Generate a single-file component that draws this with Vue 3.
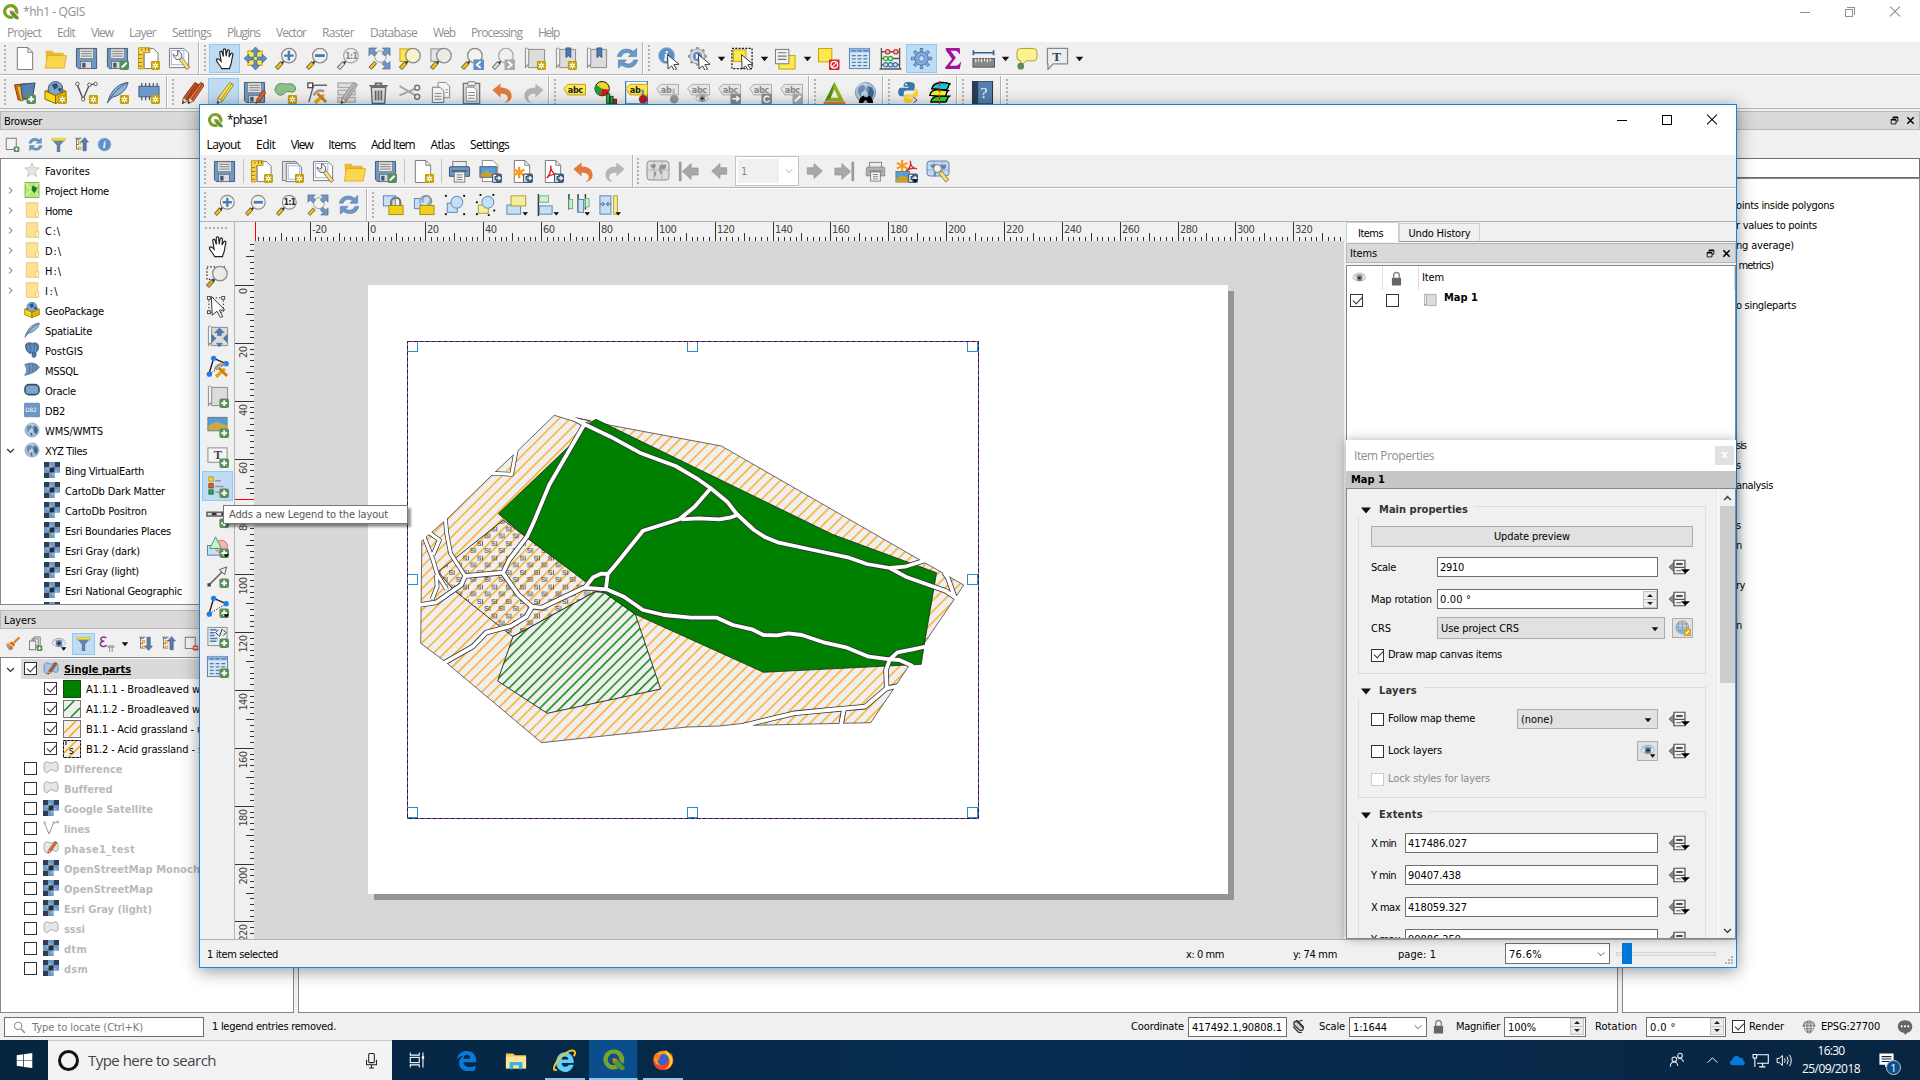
<script setup>
import { h } from 'vue'

/* Sets the tracking of a label so that it fills the given width. */
const vFit = {
  mounted(el, { value }) {
    if (!value) return
    const n = el.textContent.trim().length
    el.style.letterSpacing = (value - el.getBoundingClientRect().width) / n + 'px'
  },
}

/* ---------- icon library (24 x 24 grid) ---------- */
const B = '#6d97c4'
const add = '<rect x="14" y="14" width="10" height="10" rx="2" fill="#5a8c5a"/><path d="M19 16v6M16 19h6" stroke="#fff" stroke-width="2"/>'
const star = '<rect x="14.5" y="14.5" width="9.5" height="9.5" rx="1.5" fill="#c4a000"/><path d="M19.2 15.8v7M16.2 17.5l6 3.6M22.2 17.5l-6 3.6" stroke="#fff" stroke-width="1.3"/><circle cx="19.2" cy="19.3" r="1.8" fill="#fff"/><circle cx="19.2" cy="19.3" r=".8" fill="#c4a000"/>'
const exp = '<rect x="13.5" y="14" width="10.5" height="10" rx="2" fill="#415a75"/><path d="M18 16h-2.500v6h2.500M18 19h4M20.300 17l2 2-2 2" stroke="#fff" stroke-width="1.300" fill="none"/>'
const drop = '<path d="M18 20h6l-3 3.500z" fill="#000"/>'
const lens = (fill = '#f2f2ee', hnd = '#fcc200', rim = '#8a8a86') =>
  `<path d="M1.500 22.500L7.500 16" stroke="#555" stroke-width="4.400"/><path d="M2 22L7 16.700" stroke="${hnd}" stroke-width="2.800"/><path d="M7 17l3-3" stroke="#333" stroke-width="1.800"/><circle cx="14.500" cy="9" r="7.600" fill="${fill}" stroke="${rim}" stroke-width="1.300"/>`
const floppy = (w = 22) => `<path d="M1.500 1.500h${w - 1}v21h-19l-2-2z" fill="${B}" stroke="#415a75"/><rect x="5" y="2" width="14" height="10" fill="#e8e8e8" stroke="#777" stroke-width=".7"/><path d="M6.500 4.500h11M6.500 7h11M6.500 9.500h11" stroke="#777"/><rect x="6" y="15" width="11" height="7.500" fill="#ddd" stroke="#555" stroke-width=".6"/><rect x="7.500" y="16.500" width="3.500" height="5" fill="#415a75"/>`
const page = '<path d="M4.500.5h11l5 5v18h-16z" fill="#fff" stroke="#777"/><path d="M15.500.5v5h5" fill="none" stroke="#777"/>'
const folder = '<path d="M1.500 4h7l2 2h10v3h3l-2.500 13h-18z" fill="#e9b92f"/><path d="M1.500 22L3.500 9h20l-2.500 13z" fill="#fcd64e" stroke="#d9a522" stroke-width=".8"/>'
const undo = (c) => `<path d="M1.500 9.500L10 2.500v4.300c7 0 11.500 3 11.500 9 0 4-3.500 6.500-8 7 3-1.300 4-3 4-5 0-3-2.500-4.500-7.500-4.500v4z" fill="${c}"/>`
const flip = (s) => `<g transform="translate(24 0) scale(-1 1)">${s}</g>`
const refresh = `<path d="M1.500 10C2.500 3 11-.5 18 4.500L21.500 1.500v8.500H13l2.700-2.800C11.500 4.500 7 6 5.700 10z" fill="${B}" stroke="#4c78a8" stroke-width=".6"/><path d="M22.500 13.500c-1 7-9.500 10.500-16.500 5.500L2.500 22v-8.500H11l-2.700 2.800c4.200 2.700 8.700 1.200 10-2.800z" fill="${B}" stroke="#4c78a8" stroke-width=".6"/>`
const hand = '<path d="M7.500 22.500C6 19 2 15.500 2 13.500c0-1.500 2-1.500 3.200-.3L7 15 5.600 6.300c-.3-2 1.900-2.300 2.400-.6L9.300 10 9.200 3.500c0-2 2.500-2 2.600 0L12.200 9.600l1-5.400c.4-1.800 2.600-1.400 2.400.5L15.200 10.500l1.800-3.300c.9-1.500 2.700-.6 2.200 1-.8 3-1.200 6.500-1.700 8.800-.4 2-1.500 3.500-1.800 5.500z" fill="#fff" stroke="#222" stroke-width="1.200" transform="translate(1.500 0)"/>'
const arrows4 = (c) => `<path d="M1 1h8L6.500 3.500l3 3-3 3-3-3L1 9zM23 1v8l-2.500-2.500-3 3-3-3 3-3L15 1zM23 23h-8l2.500-2.500-3-3 3-3 3 3L23 15z" fill="${c}" stroke="#415a75" stroke-width=".6"/>`
const pencil = (a, b) => `<path d="M18.500 1.500l4 2.500L11 21l-5.500 2.500L6.500 17.500z" fill="${a}" stroke="${b}" stroke-width=".9"/><path d="M20.500 2.800L9 20" stroke="${b}" stroke-width=".8"/><path d="M6.500 17.500l4.500 3.300-5.500 2.700z" fill="#f0dcb4" stroke="#555" stroke-width=".5"/><path d="M6 20.800l1.700 1.500-2.500 1.400z" fill="#222"/>`
const sheet = '<path d="M5.500 2.500h17v19h-17z" fill="#dcdcdc" stroke="#8a8a8a"/><path d="M2.500 1.500c2-1 3.500 0 3.500 2v15.500c-1.500-1-3.500.5-3.500 3z" fill="#f2f2f2" stroke="#8a8a8a"/><path d="M2.500 22c0-1.500 1-2.500 3-2.500" fill="none" stroke="#8a8a8a"/>'
const globe = '<circle cx="12" cy="12" r="10.500" fill="#a9c2dc" stroke="#6f8fb3"/><path d="M4 7l5-3 3 2-1 4-3 2-1 4-3-4zM14 5l5 2 2 5-2 6-3-1-2-5-2-3zM9 17l3-1 1 4-2 1z" fill="#40658f"/><circle cx="9" cy="8" r="7" fill="#fff" opacity=".25"/>'
const tag = (c, s, t = 'abc', k = '#222') => `<path d="M.8 8L5 3.500h18.500v11H5z" fill="${c}" stroke="${s}"/><text x="5" y="12" font-size="8.500" font-weight="700" font-family="DejaVu Sans" letter-spacing="-.4" fill="${k}">${t}</text>`
const cursor = '<path d="M11 8l12 10-5.500.5 3 4.500-2.500 1.500-2.800-4.700L11.500 23z" fill="#fff" stroke="#333"/>'
const padlock = (b, s) => `<path d="M8 11V7.500a4 4 0 0 1 8 0V11" fill="none" stroke="${s}" stroke-width="2"/><rect x="5.500" y="11" width="13" height="11" rx="1" fill="${b}"/>`
const nodes = '<path d="M3 20L8 3.500 21 9" stroke="#222" fill="none" stroke-width="1.500"/><path d="M3 20L21 9" stroke="#222" stroke-dasharray="1.500 1.500"/><g fill="#1e7cf0"><circle cx="3.500" cy="20" r="2.800"/><circle cx="8" cy="3.500" r="2.800"/><circle cx="21" cy="9" r="2.800"/></g>'
const tools = '<path d="M10 22l9-8M11 23.500l9-9" stroke="#e3a914" stroke-width="2.200"/><path d="M13 13l9 9" stroke="#c98010" stroke-width="3"/><path d="M9 15c3-5 7-6 11-4" stroke="#999" stroke-width="2.500" fill="none"/>'
const tiles = '<g fill="#6d97c4"><rect x="8" width="8" height="8"/><rect y="8" width="8" height="8"/><rect x="16" y="8" width="8" height="8"/><rect x="8" y="16" width="8" height="8"/></g><rect x="8" y="8" width="8" height="8" fill="#1f2d3f"/><g fill="#2c3e55"><rect width="8" height="8"/><rect x="16" width="8" height="8"/><rect y="16" width="8" height="8"/></g><g fill="#8bb0da"><rect x="8" y="4" width="4" height="4"/><rect x="4" y="8" width="4" height="4"/><rect x="16" y="12" width="4" height="4"/><rect x="12" y="16" width="4" height="4"/></g>'
const poly = (c = '#e6e6e6', s = '#999') => `<path d="M1.500 8c0-5 4-6.500 7-4.500s6 1 9-.5c3-1 5 1 5 5s1 8-2 9-5-2.500-8-2.500-4 4-7 4.500c-4 0-4-6-4-11z" fill="${c}" stroke="${s}" stroke-width="1.200"/>`
const eye = (c) => `<path d="M1.500 11C6 4.500 17 4 22 11c-4 6.500-15 7-20.500 0z" fill="#f4f4f4" stroke="#999" stroke-width="1.200"/><path d="M2 8C7 2 17 2.500 21 7" fill="none" stroke="#aaa" stroke-width="1.500"/><circle cx="12" cy="11" r="5" fill="${c}"/><circle cx="12" cy="11" r="2" fill="#222"/>`
const tree = '<path d="M4 2v18M4 4h5M4 12h4M4 19h4" stroke="#666" stroke-width="1.300" fill="none"/><g fill="#fce08a" stroke="#d9861a"><rect x="7" y="7" width="4" height="4"/><rect x="7" y="16" width="4" height="4"/></g><path d="M2 2h10" stroke="#888" stroke-width="2"/>'
const gearPath = (c, s) => `<g stroke="${s}" stroke-width="3.400"><path d="M12 1v22M1 12h22M4.300 4.300l15.400 15.400M19.700 4.300L4.300 19.700"/></g><g stroke="${c}" stroke-width="2"><path d="M12 2v20M2 12h20M5 5l14 14M19 5L5 19"/></g><circle cx="12" cy="12" r="7" fill="${c}" stroke="${s}"/><circle cx="12" cy="12" r="3" fill="#bfdaf2" stroke="${s}"/>`
const tableIcon = `<rect x="1.500" y="1.500" width="21" height="21" fill="#d7e6f5" stroke="#5580b0"/><path d="M2 3.500h20" stroke="#8db4de" stroke-width="4"/><path d="M4 4h4M10 4h4M16 4h5M4 9h4M10 9h4M16 9h4M4 12.500h4M10 12.500h4M16 12.500h4M4 16h4M10 16h4M16 16h4M4 19.500h4M10 19.500h4M16 19.500h4" stroke="#4f7cb0" stroke-width="1.300"/>`
const qlogo = '<path d="M12 1.500a10.500 10.500 0 1 0 5 19.700l-3.300-3.600A6 6 0 1 1 18 12.500l4 4.200A10.500 10.500 0 0 0 12 1.500z" fill="#7aa32b"/><path d="M11 11l4.500.4 8 8.800V23h-4L11.400 15z" fill="#589632"/><path d="M11 10.500l5 .8-4.500 4.500z" fill="#ee7913"/>'
const arrowFat = (c) => `<path d="M2 12L12 3v5h8v8h-8v5z" fill="${c}" stroke="#8a8a8a" stroke-width=".7"/>`
const printer = (a, b) => `<rect x="5" y="1.500" width="14" height="8" fill="#eee" stroke="#777"/><path d="M1.500 8.500q0-1.500 1.500-1.500h18q1.500 0 1.500 1.500V17h-21z" fill="${a}" stroke="${b}"/><path d="M4 11.500h16" stroke="${b}" stroke-width="1.500"/><rect x="6.500" y="12.500" width="11" height="10.500" fill="#f5f5f5" stroke="#777"/><path d="M9 15.500h6M9 18h6M9 20.500h6" stroke="#777"/>`
const worldMap = (c, k, ht = 19) => `<rect x="1" y="2" width="22" height="${ht}" rx="3" fill="${c}" stroke="${k}"/><path d="M8 2v${ht}M16 2v${ht}M1 11h22" stroke="${k}" stroke-width=".5"/><path d="M4 6l5-1 1 2-2 3-2-1zM8.500 12l2 2-1.500 4-1-1zM14 6l6-.5v3l-2 2-2-1-1.500 1 1.500 3-1.500 2-1.500-5z" fill="${k}"/>`
const wrench = '<path d="M13 12l8.500 10.500" stroke="#8a7a3a" stroke-width="4.500"/><path d="M13.500 12.500L21 22" stroke="#f1dd8a" stroke-width="3"/><path d="M5.500 7.500c0 4 3 6 6.500 5.500l2.500-2.500C14.500 7 13 4.500 10 4v4.500L8 9.500 5.800 7.500z" fill="#eee" stroke="#555"/>'

const ICONS = {
  qgis: qlogo,
  page, folder, floppy: floppy(), refresh, hand, sheet, globe, nodes, tiles,
  floppyEdit: floppy() + '<rect x="14" y="14" width="10" height="10" rx="2" fill="#5a8c5a"/><path d="M16.500 21.500l5-5" stroke="#fff" stroke-width="2.200"/>',
  newPage: page + star,
  newLayout: '<path d="M7.500 1.500h9.500l5 5v16H7.500z" fill="#fff" stroke="#777"/><path d="M1.500.8h12v5h-7v17h-5z" fill="#f8d64c" stroke="#b8901c"/><path d="M4 3h2M9 1v3M12 1v3M2 8h3M2 12h3M2 16h3M2 20h3" stroke="#8a6a10"/>' + star,
  dupLayout: '<path d="M1.500 1.500h14l3 3v17h-17z" fill="#e0e0e0" stroke="#777"/><path d="M5.500 3.500h12l4 4v15h-16z" fill="#fff" stroke="#777"/><rect x="7.500" y="6" width="12" height="14" fill="none" stroke="#9ab0e6"/>' + star,
  layoutMgr: '<path d="M1.500 1.500h15l5 5v15h-20z" fill="#fff" stroke="#777"/><rect x="3.500" y="3.500" width="13" height="15" fill="none" stroke="#9ab0e6"/>' + wrench,
  pan: '<rect x="4" y="4" width="15" height="15" fill="#fce94f" stroke="#c4a000"/><path d="M12 0l4.500 5h-3v5h-3V5h-3zM12 24l-4.500-5h3v-5h3v5h3zM0 12l5-4.500v3h5v3H5v3zM24 12l-5 4.500v-3h-5v-3h5v-3z" fill="#5d8fc9" stroke="#2f5b8f" stroke-width=".7"/>',
  zoomIn: lens() + '<path d="M14.500 4v10M9.500 9h10" stroke="#4c7ab5" stroke-width="2.600"/>',
  zoomOut: lens() + '<path d="M9.500 9h10" stroke="#4c7ab5" stroke-width="3"/>',
  zoom11: lens() + '<text x="8.500" y="12.500" font-size="9" font-weight="700" font-family="DejaVu Sans Condensed" letter-spacing="-.6" fill="#222">1:1</text>',
  zoom11g: lens('#f0f0f0', '#ddd', '#aaa') + '<text x="8.500" y="12.500" font-size="9" font-weight="700" font-family="DejaVu Sans Condensed" letter-spacing="-.6" fill="#888">1:1</text>',
  zoomFull: '<path d="M2 22.500L8 16" stroke="#555" stroke-width="4"/><path d="M2.500 22L7.500 16.500" stroke="#fcc200" stroke-width="2.500"/><circle cx="13" cy="10" r="6" fill="#f2f2ee" stroke="#999"/>' + arrows4(B),
  zoomSel: '<rect x="1" y="2" width="12" height="13" fill="#fce94f" stroke="#c4a000"/>' + lens('rgba(246,243,205,.93)'),
  zoomLayer: '<rect x="1" y="2" width="12" height="13" fill="#e4e4e4" stroke="#888"/>' + lens('rgba(236,236,232,.93)'),
  zoomLast: lens() + '<rect x="13" y="13" width="11" height="11" fill="#5d8fc9"/><path d="M20.500 15l-4 3.500 4 3.500" stroke="#fff" stroke-width="2" fill="none"/>',
  zoomNext: lens('#f0f0f0', '#ddd', '#aaa') + '<rect x="13" y="13" width="11" height="11" fill="#aaa"/><path d="M16.500 15l4 3.500-4 3.500" stroke="#fff" stroke-width="2" fill="none"/>',
  mapNew: sheet + star,
  bookNew: sheet + '<path d="M12.500 1h5v10l-2.500-2-2.500 2z" fill="#4c7ab5" stroke="#2f5b8f"/>' + star,
  book: sheet + '<path d="M12.500 1h5v10l-2.500-2-2.500 2z" fill="#4c7ab5" stroke="#2f5b8f"/>',
  identify: '<circle cx="10" cy="9" r="8.500" fill="#5d8fc9" stroke="#a9c4e4"/><text x="7" y="14.500" font-size="15" font-style="italic" font-weight="700" font-family="Liberation Serif" fill="#fff">i</text>' + cursor,
  action: '<g transform="scale(.82)"><g stroke="#999" stroke-width="3.500"><path d="M12 0v24M0 12h24M3.500 3.500l17 17M20.500 3.500l-17 17"/></g><circle cx="12" cy="12" r="9.500" fill="#ddd" stroke="#888"/><circle cx="12" cy="12" r="6" fill="#5d8fc9"/><path d="M10 8.500l5 3.500-5 3.500z" fill="#fff"/></g>' + cursor,
  select: '<rect x="1" y="1.500" width="21" height="21" fill="none" stroke="#111" stroke-dasharray="2 1.500" stroke-width="1.300"/><rect x="2.500" y="3" width="13" height="12" fill="#fce94f" stroke="#c4a000"/>' + cursor,
  selForm: '<rect x="5" y="9" width="17" height="14" fill="#fce94f" stroke="#c4a000"/><rect x="1.500" y="2.500" width="14" height="15" fill="#f2f2f2" stroke="#777"/><path d="M4 6h9M4 9.500h9M4 13h9" stroke="#777" stroke-width="1.300"/>',
  deselect: '<rect x="1.500" y="1.500" width="14" height="14" fill="#fce94f" stroke="#c4a000"/><rect x="12.500" y="13" width="11" height="11" rx="1" fill="#d9262c"/><circle cx="18" cy="18.500" r="3.500" fill="none" stroke="#fff" stroke-width="1.300"/><path d="M15.500 21l5-5" stroke="#fff" stroke-width="1.300"/>',
  table: tableIcon,
  abacus: '<path d="M2.500 1v22M21.500 1v22M.5 23h23M2.500 5h19M2.500 12h19M2.500 18.500h19" stroke="#555" stroke-width="1.400"/><g stroke-width="1.300"><circle cx="9" cy="5" r="2.300" fill="#fbb" stroke="#c33"/><circle cx="17.500" cy="5" r="2.300" fill="#fbb" stroke="#c33"/><circle cx="7" cy="12" r="2.300" fill="#cfc" stroke="#3a3"/><circle cx="12" cy="12" r="2.300" fill="#cfc" stroke="#3a3"/><circle cx="7" cy="18.500" r="2.300" fill="#cdf" stroke="#47a"/><circle cx="12" cy="18.500" r="2.300" fill="#cdf" stroke="#47a"/><circle cx="17" cy="18.500" r="2.300" fill="#cdf" stroke="#47a"/></g>',
  gear: gearPath('#83abd8', '#4c7ab5'),
  sigma: '<path d="M5 1h14.500l.5 6h-1.300c-.7-2.400-2-3.200-4.500-3.200H10l5.500 7.500L9 19.500h6c2.500 0 4-1 5-3.500h1L19.500 23H4.500v-2l7-8.500L5 3.500z" fill="#a0119e"/>',
  measure: '<path d="M1.500 6h21M1.500 3.500v5M22.500 3.500v5" stroke="#35608f" stroke-width="1.800"/><rect x="1" y="12" width="22.500" height="9" fill="#888" stroke="#555"/><path d="M4 12v4M7 12v3M10 12v4M13 12v3M16 12v4M19 12v3" stroke="#fff"/>',
  tip: '<path d="M6 1.500h13q4 0 4 4v5q0 4-4 4h-7.500L6 20v-5.500q-4 0-4-4v-5q0-4 4-4z" fill="#fbf191" stroke="#b39b1e"/><circle cx="6" cy="20" r="3.500" fill="#5a8c5a"/>',
  textNote: '<path d="M1.500 1.500h21v16h-15L2 23.500v-6h-.5z" fill="#e8eef2" stroke="#888" stroke-width="1.300"/><text x="6.500" y="14.500" font-size="14" font-family="Liberation Serif" font-weight="700" fill="#444">T</text>',
  dsm: '<path d="M1.500 4l11-1 2 15-9 2z" fill="#e2642a" stroke="#8a3a10"/><path d="M4 6l9-3 3 15-8 3z" fill="#f2c11f" stroke="#9a7410"/><path d="M8 3.500L23 2l-2.500 15L10 19z" fill="#5580b0" stroke="#2b4a70"/>' + add,
  gpkg: '<path d="M1 10l11-4 11 4-11 5z" fill="#b58a00"/><circle cx="12" cy="8" r="7.500" fill="#7fa5cf" stroke="#415a75"/><path d="M8 4l5-2 2 4-4 3zM14 8l5-1-2 5z" fill="#2f4f78"/><path d="M1 10.500l11 4.500v8.500L1 19z" fill="#f7d916" stroke="#806800"/><path d="M23 10.500L12 15v8.500l11-4.500z" fill="#e0b800" stroke="#806800"/>',
  gpkgNew: '<path d="M1 10l11-4 11 4-11 5z" fill="#b58a00"/><circle cx="12" cy="8" r="7.500" fill="#7fa5cf" stroke="#415a75"/><path d="M8 4l5-2 2 4-4 3zM14 8l5-1-2 5z" fill="#2f4f78"/><path d="M1 10.500l11 4.500v8.500L1 19z" fill="#f7d916" stroke="#806800"/><path d="M23 10.500L12 15v8.500l11-4.500z" fill="#e0b800" stroke="#806800"/>' + star,
  shpNew: '<path d="M2 3l6.500 16L15 4l6.500-1" stroke="#555" stroke-width="1.500" fill="none"/><g fill="#fff" stroke="#555"><circle cx="2.500" cy="3" r="1.800"/><circle cx="8.500" cy="19" r="1.800"/><circle cx="15" cy="4" r="1.800"/><circle cx="21.500" cy="3" r="1.800"/></g>' + star,
  feather: '<path d="M1.500 23C4 13 10 3 23 1.500 22 8 17 14 7 17c-2 1-4 3-5.500 6z" fill="#8db4de" stroke="#415a75"/><path d="M3 20.500C8 12 14 6 22 2" stroke="#415a75" fill="none"/>',
  featherNew: '<path d="M1.500 23C4 13 10 3 23 1.500 22 8 17 14 7 17c-2 1-4 3-5.500 6z" fill="#8db4de" stroke="#415a75"/><path d="M3 20.500C8 12 14 6 22 2" stroke="#415a75" fill="none"/>' + star,
  memory: '<path d="M5 2v18M9 2v18M13 2v18M17 2v18M21 2v18" stroke="#555" stroke-width="1.300"/><rect x="2" y="5.500" width="21" height="11" fill="#6d97c4" stroke="#35608f"/>' + star,
  pencils: `<g transform="translate(-4 0)">${pencil('#c8512a', '#6d2a10')}</g><g transform="translate(2 0)">${pencil('#e26a3a', '#6d2a10')}</g>`,
  pencil: pencil('#fce35a', '#8a7a1a'),
  saveEdits: floppy() + '<path d="M21 10l3 2-6.500 9-4 2.500 1-4.500z" fill="#e2642a" stroke="#7a2a08" stroke-width=".7"/>',
  polyNew: '<path d="M2 6c3-6 9-2 13-3 5-1 9 3 7 7-3 4-7-1-10 2s-6 4-9 1-2-5-1-7z" fill="#8fbf8a" stroke="#5a8c5a"/>' + star,
  vertex: '<path d="M4 22L9 4.500h14" stroke="#666" fill="none" stroke-width="1.500"/><rect x="3" y="2" width="5" height="5" fill="#fff" stroke="#444" stroke-width="1.300"/>' + tools,
  multiEdit: '<g fill="#ddd" stroke="#999"><rect x="2" y="2" width="18" height="5"/><rect x="2" y="9.500" width="18" height="5"/><rect x="2" y="17" width="18" height="5"/></g>' + pencil('#bbb', '#888'),
  trash: '<path d="M4.500 6.500h15l-1 17h-13z" fill="#ddd" stroke="#666" stroke-width="1.400"/><path d="M2.500 5h19M9 5V2.500h6V5M9 10v10M12 10v10M15 10v10" stroke="#666" stroke-width="1.800" fill="none"/>',
  cut: '<path d="M1.500 5L18 15M1.500 15L18 8" stroke="#aaa" stroke-width="2.200"/><circle cx="20" cy="7" r="2.600" fill="none" stroke="#777" stroke-width="1.500"/><circle cx="20" cy="16.500" r="2.600" fill="none" stroke="#777" stroke-width="1.500"/>',
  copy: '<path d="M9.500 1.500h8l4 4v12h-12z" fill="#f4f4f4" stroke="#888"/><path d="M3.500 6.500h8l4 4v12h-12z" fill="#f4f4f4" stroke="#777"/><path d="M6 13h7M6 16h7M6 19h7M17.500 9h2M17.500 12h2" stroke="#888"/>',
  paste: '<rect x="3.500" y="2.500" width="17" height="21" fill="#ddd" stroke="#777" stroke-width="1.400"/><rect x="8" y=".8" width="8" height="4" rx="1" fill="#eee" stroke="#777"/><path d="M6.500 6.500h8l3 3v11.500h-11z" fill="#fff" stroke="#888"/><path d="M8.500 12h7M8.500 15h7M8.500 18h7" stroke="#888"/>',
  undo: undo('#e07b3c'), redo: flip(undo('#b5b5b5')),
  label: tag('#fce94f', '#c4a000'),
  diagram: '<circle cx="8.500" cy="8" r="7.500" fill="#e8d92a" stroke="#111"/><path d="M8.500 8L2 4A7.500 7.500 0 0 0 6 15z" fill="#1d9a3a"/><path d="M8.500 8L6 15a7.500 7.500 0 0 0 10-6z" fill="#d01a1a"/><path d="M13 23.500V13h3.500v10.500zM16.500 23.500V16H20v7.500z" fill="#1db33a" stroke="#111" stroke-width=".7"/><path d="M20 23.500V19h4v4.500z" fill="#d01a1a" stroke="#111" stroke-width=".7"/>',
  labelPin: '<rect x=".5" y="0" width="23" height="24" fill="#fbfbfb" stroke="#2a7ad8" stroke-width="1.500"/>' + tag('#fce94f', '#c4a000', 'ab') + '<path d="M18.500 18V9" stroke="#888" stroke-width="2.500"/><circle cx="19" cy="19" r="4.500" fill="#b31f1f"/>',
  labelG1: tag('#e6e6e6', '#aaa', 'ab', '#888') + '<path d="M18.500 18V8" stroke="#bbb" stroke-width="2.500"/><circle cx="19" cy="19" r="4.500" fill="#999"/>',
  labelG2: tag('#e6e6e6', '#aaa', 'abc', '#888') + `<g transform="translate(8 11) scale(.66)">${eye('#999')}</g>`,
  labelG3: tag('#e6e6e6', '#aaa', 'abc', '#888') + '<rect x="13" y="13" width="11" height="11" rx="1" fill="#8c8c8c"/><path d="M15 18.500h6M19 16l3 2.500-3 2.500" stroke="#fff" stroke-width="1.600" fill="none"/>',
  labelG4: tag('#e6e6e6', '#aaa', 'abc', '#888') + '<rect x="13" y="13" width="11" height="11" rx="1" fill="#8c8c8c"/><path d="M21 17a3 3 0 1 0 .5 3" stroke="#fff" stroke-width="1.600" fill="none"/>',
  labelG5: tag('#e6e6e6', '#aaa', 'abc', '#888') + '<rect x="13" y="13" width="11" height="11" rx="1" fill="#aaa"/><path d="M15.500 21.500l6-6" stroke="#fff" stroke-width="2.200"/>',
  triangle: '<path d="M12 1l10 20H2zM12 9l-4 8.500h8z" fill="#8ab520" fill-rule="evenodd"/><path d="M12 1l-2 9-2 7.500L2 21z" fill="#4f8a10"/><path d="M1 21.500h22l.5 2.500H.5z" fill="#e07b2a"/>',
  globeFind: globe + '<path d="M5 23c0-4 2-7 5-8l1 2h3l1-2c3 1 5 4 5 8h-5.500l-1.500-3h-2l-1.500 3z" fill="#000"/>',
  python: '<path d="M11.500 1C6.500 1 7 3.500 7 6h5v1H4C.5 7 0 16 4.500 16H7v-3q0-3 3-3h6q2.500 0 2.500-3V4c0-2-2-3-7-3z" fill="#3a78ab"/><path d="M12 23c5 0 4.500-2.500 4.500-5h-5v-1h8c3.500 0 4-9-.500-9H18v3q0 3-3 3H9q-2 0-2 2.500V20c0 2 1.500 3 5 3z" fill="#ffd43b"/><circle cx="9.500" cy="3.700" r="1" fill="#fff"/><path d="M17 17l4 3-4 3" stroke="#444" fill="none"/>',
  dots3: '<path d="M4 8c2-8 12-7 19-5-3 2-1 5-4 6-5 1-10-1-15-1z" fill="#18c4d8" stroke="#000" stroke-width="1.500"/><path d="M2 15c1-8 12-6 19-5-3 2-1 5-3 6-5 1-11-1-16-1z" fill="#f5f02a" stroke="#000" stroke-width="1.500"/><path d="M3 22c1-8 11-6 19-6-3 2-1 5-4 6z" fill="#2ad82a" stroke="#000" stroke-width="1.500"/><path d="M12 0v24" stroke="#e02020" stroke-width="1.500" stroke-dasharray="5 2"/>',
  help: '<rect x="1.500" y="0" width="21" height="24" fill="#5580b0" stroke="#1d2d40"/><rect x="1.500" y="0" width="6" height="24" fill="#2c3e55"/><text x="10" y="18" font-size="16" font-family="Liberation Serif" fill="#fff">?</text>',
  print: printer('#6d97c4', '#35506f'), printG: printer('#b0b0b0', '#888'),
  imgOut: '<path d="M3.500.5h11l5 5v17h-16z" fill="#fff" stroke="#888"/><rect x="1" y="7" width="17" height="11" fill="#4f9fe0" stroke="#555"/><path d="M1.500 15l6-4 5 3 5-1v4.500h-16z" fill="#c9a227"/>' + exp,
  svgOut: page + '<path d="M9.500 7v12M4 10l11 6M15 10L4 16" stroke="#f59a1a" stroke-width="2.400"/>' + exp,
  pdfOut: page + '<path d="M6 19c3-3 5-9 4-13 0 5 3 9 7 9-4-1-9 1-11 4z" fill="none" stroke="#d9262c" stroke-width="1.500"/>' + exp,
  atlas: worldMap('#dcdcdc', '#909090'),
  atlasSet: worldMap('#c4d8ee', '#5f86b3', 15) + '<path d="M14 13l7.500 9" stroke="#8a7a3a" stroke-width="4.500"/><path d="M14.500 13.500L21 21.500" stroke="#f1dd8a" stroke-width="3"/><circle cx="11.500" cy="9.500" r="4" fill="#eee" stroke="#777"/>',
  atlasOut: '<path d="M7.500 0v12M2 3l11 6M13 3L2 9" stroke="#f59a1a" stroke-width="2.200"/><path d="M12 11c3-2 5-6 4-10 0 5 3 8 7 8-4-1-9 0-11 3z" fill="none" stroke="#d9262c" stroke-width="1.500"/><rect x="1" y="12" width="14" height="11" fill="#4f9fe0" stroke="#777"/><path d="M1 20l6-4 8 3v4H1z" fill="#c9a227"/>' + exp + drop,
  first: '<path d="M2.500 1v22" stroke="#999" stroke-width="3"/><g transform="translate(3 0)">' + arrowFat('#a8a8a8') + '</g>',
  prev: arrowFat('#a8a8a8'), next: flip(arrowFat('#a8a8a8')),
  last: flip('<path d="M2.500 1v22" stroke="#999" stroke-width="3"/><g transform="translate(3 0)">' + arrowFat('#a8a8a8') + '</g>'),
  lock: '<rect x="1.500" y="2" width="13" height="11" fill="#c3e0f7" stroke="#5580b0"/><path d="M10 13V9a5 5 0 0 1 10 0v4" fill="none" stroke="#777" stroke-width="2.500"/><rect x="7.500" y="12.500" width="15.500" height="10" fill="#f2cf1a" stroke="#a88a00"/>',
  unlock: '<rect x="1.500" y="5" width="10" height="11" fill="#c3e0f7" stroke="#5580b0"/><circle cx="14" cy="8" r="6.500" fill="#c3e0f7" stroke="#5580b0"/><path d="M11 9a4.500 4.500 0 1 1 8-1l-3 5" fill="none" stroke="#999" stroke-width="2"/><rect x="7.500" y="12.500" width="15.500" height="10" fill="#f2cf1a" stroke="#a88a00"/>',
  group: '<rect x="3.500" y="10" width="11" height="10" fill="#c3e0f7" stroke="#5580b0"/><circle cx="14" cy="9" r="6.500" fill="#c3e0f7" stroke="#5580b0"/><g fill="#000"><rect x="1" y="1" width="2" height="2"/><rect x="21" y="1" width="2" height="2"/><rect x="1" y="21" width="2" height="2"/><rect x="21" y="21" width="2" height="2"/></g>',
  ungroup: '<rect x="3.500" y="12" width="11" height="9" fill="#f5ee9a" stroke="#a89a30"/><circle cx="14" cy="9" r="6.500" fill="#c3e0f7" stroke="#5580b0"/><g fill="#000"><rect x="5" y="0" width="2" height="2"/><rect x="19" y="0" width="2" height="2"/><rect x="1" y="8" width="2" height="2"/><rect x="1" y="21" width="2" height="2"/><rect x="14" y="22" width="2" height="2"/><rect x="20" y="17" width="2" height="2"/></g>',
  raise: '<rect x="1" y="12" width="15" height="10" fill="#c3e0f7" stroke="#5580b0"/><rect x="5.500" y="2" width="16" height="11" fill="#f5ee9a" stroke="#a89a30"/>' + drop,
  align: '<path d="M1.500 0v24" stroke="#333" stroke-width="1.500"/><rect x="2.500" y="2" width="10" height="7" fill="#c9f2cf" stroke="#6ab07a"/><rect x="2.500" y="13" width="14" height="9" fill="#c3e0f7" stroke="#5580b0"/>' + drop,
  distribute: '<path d="M1 0v17M11 0v20M19 0v17" stroke="#333" stroke-width="1.500"/><rect x="1" y="6" width="4" height="10" fill="#c9f2cf" stroke="#6ab07a"/><rect x="11" y="6" width="6" height="14" fill="#c3e0f7" stroke="#5580b0"/><rect x="19" y="5" width="4" height="9" fill="#c9f2cf" stroke="#6ab07a"/>' + drop,
  resize: '<rect x="1" y="2" width="12" height="20" fill="#c3e0f7" stroke="#5580b0"/><path d="M1 11h4M13 11H9M3.500 8.500L6 11l-2.500 2.500M10.500 8.500L8 11l2.500 2.500" stroke="#35506f" fill="none"/><rect x="16" y="2" width="4" height="20" fill="#f5ee9a" stroke="#a89a30"/>' + drop,
  zoomArea: '<rect x="1" y="2" width="18" height="13" fill="none" stroke="#222" stroke-dasharray="1.500 2" stroke-width="1.300"/>' + lens('rgba(234,234,230,.95)', '#e2a92a'),
  selItem: '<rect x="3" y="3" width="15" height="15" fill="none" stroke="#222" stroke-dasharray="1.500 2"/><g fill="#fff" stroke="#444"><rect x="1.500" y="1.500" width="3" height="3"/><rect x="16.500" y="1.500" width="3" height="3"/><rect x="1.500" y="16.500" width="3" height="3"/></g><path d="M5.500 1.500l14 14-5.500.5 3.500 6.500-2.500 1-3.500-6.500-5 4z" fill="#fff" stroke="#333"/>',
  moveContent: sheet + '<g fill="#4c7ab5" stroke="#2f5b8f" stroke-width=".5"><path d="M14 3l5 5h-3v3h-4V8H9zM6 10l4.500 4L6 18zM22 10l-4 4 4 4zM11 19h6l-3 4z"/></g>',
  editNodes: nodes + tools,
  addMap: sheet + add,
  addPic: '<rect x="2" y="2.500" width="20" height="14" fill="#4f9fe0" stroke="#777"/><path d="M2.500 11l8-4 11.500 4v5h-19.500z" fill="#c9a94a"/>' + add,
  addLabel: '<rect x="2" y="3" width="20" height="15" fill="#f4f4f4" stroke="#888"/><text x="8" y="15" font-size="13" font-family="Liberation Serif" font-weight="700" fill="#444">T</text>' + add,
  legend: '<g stroke-width=".8"><rect x="3" y="2" width="4.500" height="4.500" fill="#fcd62a" stroke="#a88a00"/><rect x="3" y="9" width="4.500" height="4.500" fill="#f05a1a" stroke="#902a00"/><rect x="3" y="15.500" width="4.500" height="4.500" fill="#1db05a" stroke="#0a6030"/></g><path d="M9.500 6h6M9.500 12h9M9.500 18h5" stroke="#999" stroke-width="1.600"/>' + add,
  scalebar: '<rect x="1" y="7.500" width="22" height="4" fill="#ddd" stroke="#444" stroke-width="1.300"/><path d="M6 9.500h5M16 9.500h6" stroke="#333" stroke-width="2.500"/>' + add,
  shape: '<rect x="1.500" y="11" width="14" height="10" fill="#c3e0f7" stroke="#5580b0"/><circle cx="16" cy="12" r="6.500" fill="#f7b4b0" stroke="#d0706a"/><path d="M10 2l6 12H4z" fill="#c9f2cf" stroke="#4a9a5a"/>' + add + drop,
  arrow: '<path d="M3 21L18 6" stroke="#666" stroke-width="1.600"/><path d="M21.500 2l-2 8-5.500-5z" fill="#eee" stroke="#555"/><rect x="1.500" y="19" width="3.500" height="3.500" fill="#444"/>' + add,
  addNodes: nodes + add + drop,
  html: '<rect x="2" y="2.500" width="20" height="19" fill="#e8eef4" stroke="#888"/><path d="M4 5h7M4 8h5M4 11h5M4 14h8M4 17h7" stroke="#4c7ab5" stroke-width="1.600"/><path d="M13 5l-3 3 3 3M18 5l3 3-3 3M17 4l-3 8" stroke="#222" fill="none"/>' + add,
  addTable: tableIcon + add,
  fav: '<path d="M12 1l3 7.500 8 .5-6.200 5L19 22l-7-4.500L5 22l2.200-8L1 9l8-.5z" fill="#e6e8df" stroke="#b4b6ac"/>',
  home: '<rect x="1.500" y="1" width="21" height="22" fill="#b9e86a" stroke="#4aa02a"/><path d="M2 2l10 10L2 20M12 12l10 9M12 12l10-10" stroke="#eefad8" stroke-width="1.500" fill="none"/><path d="M13 5l7 4-4 8-5-5z" fill="#1c7a2a"/>',
  dir: '<path d="M3.500 1h17v22h-17z" fill="#ffe394" stroke="#e3bb5c"/><path d="M17 14h5v9h-5z" fill="#fff0b8" stroke="#e3bb5c"/>',
  postgis: '<path d="M3 3c4-3 8-2 10-1 4-2 9 0 9 5 0 4-2 8-4 8v6c-2 3-6 3-6-1v-5c-2 3-4 3-5 1C3 14 1 6 3 3z" fill="#4f79a8" stroke="#35506f"/><path d="M12 4c1 4 0 8 0 11M17 6v9M7 5v8" stroke="#8fb2da" fill="none"/>',
  mssql: '<path d="M1 4c8-4 18-3 22 4-3 4-8 9-22 12 4-5 4-11 0-16z" fill="#6d97c4" stroke="#415a75"/><path d="M7 3c3 5 2 10 0 15M12 3c3 5 2 9 0 13M17 4c2 4 1 7 0 9" stroke="#35506f" fill="none"/>',
  oracle: '<rect x="1.500" y="4" width="21" height="15" rx="6" fill="#7fa5cf" stroke="#35506f" stroke-width="2.500"/>',
  db2: '<rect x="0" y="1" width="24" height="22" rx="2" fill="#6d97c4"/><text x="2" y="15" font-size="9" font-family="DejaVu Sans Condensed" fill="#fff">DB2</text>',
  boxAdd: '<rect x="2" y="2" width="16" height="18" fill="#f4f4f4" stroke="#777" stroke-width="1.500"/>' + '<rect x="14" y="15" width="9" height="9" rx="2" fill="#5a8c5a"/><path d="M18.500 17v5M16 19.500h5" stroke="#fff" stroke-width="1.500"/>',
  boxDel: '<rect x="2" y="2" width="16" height="18" fill="#f4f4f4" stroke="#777" stroke-width="1.500"/>' + '<rect x="14" y="15" width="9" height="8" rx="2" fill="#e0463c"/><path d="M15.500 19h6" stroke="#fff" stroke-width="2"/>',
  filter: '<path d="M2 4h20l-8 9v11h-4V13z" fill="#5f86b3" stroke="#415a75"/><path d="M1.500 2h21v4h-21z" fill="#f7df3a" stroke="#a89a30" stroke-width=".6"/>',
  collapse: tree + '<path d="M17 1l6 7h-3.500v14h-5V8H11z" fill="#5580b0" stroke="#2f4f78"/>',
  expand: tree + '<path d="M17 23l6-7h-3.500V2h-5v14H11z" fill="#5580b0" stroke="#2f4f78"/>',
  info: '<circle cx="12" cy="12" r="10.500" fill="#5d8fc9" stroke="#a9c4e4" stroke-width="1.500"/><text x="9" y="18" font-size="17" font-style="italic" font-weight="700" font-family="Liberation Serif" fill="#fff">i</text>',
  brush: '<path d="M23 2l-9 9" stroke="#d98a20" stroke-width="3.500"/><path d="M2 12c5-2 8-4 10-2l3 3c1 3-2 5-4 9-4-1-8-5-9-10z" fill="#f0c04a"/><path d="M2 12l9 10-3 1c-3-2-6-6-6-11z" fill="#7a8ae0"/><path d="M4 12l9 7-2 3z" fill="#e0562a"/><path d="M11 9l5 5-2 2-6-5z" fill="#d9482a"/>',
  group2: '<path d="M9.500 1.500h10v14h-10zM6.500 4.500h10v14h-10z" fill="#f0f0f0" stroke="#666" stroke-width="1.300"/><rect x="2.500" y="8" width="10" height="14" fill="#f0f0f0" stroke="#666" stroke-width="1.300"/><rect x="14" y="15" width="9" height="9" rx="2" fill="#5a8c5a"/><path d="M18.500 17v5M16 19.500h5" stroke="#fff" stroke-width="1.500"/>',
  eyeDrop: eye('#5580b0') + '<path d="M15 17h8l-4 5z" fill="#000"/>',
  eye: eye('#888'),
  epsilon: '<path d="M11 3C7 0 2 2 3 5.500c.5 2 3 2.500 5 2.500-3 0-6 1-6 4 0 4 6 5 9.500 2" fill="none" stroke="#8a3a8a" stroke-width="2.300"/><path d="M13 14h10v4h-2v6h-2v-6h-2v6h-2v-6h-2z" fill="#aaa"/>',
  polyEdit: poly('#a9c4e4', '#5580b0') + `<g transform="translate(3 1) scale(.8)">${pencil('#b06a50', '#6d2a10')}</g>`,
  polyEditO: poly() + `<g transform="translate(3 1) scale(.8)">${pencil('#f0723a', '#8a3010')}</g>`,
  poly: poly(),
  line: '<path d="M2 4l7 17L16 4l7-1" stroke="#888" stroke-width="1.300" fill="none"/><g fill="#fff" stroke="#888"><circle cx="2.500" cy="4" r="1.500"/><circle cx="16" cy="4" r="1.500"/><circle cx="22" cy="3" r="1.500"/></g>',
  padG: padlock('#666', '#888'),
  override: '<path d="M1 12l6-7v14z" fill="#888" stroke="#666"/><rect x="6.500" y="3" width="12" height="18" fill="#f4f4f4" stroke="#555" stroke-width="1.400"/><path d="M9 8h7" stroke="#444" stroke-width="2.500"/><path d="M7 12.500h11M9 17h5" stroke="#555" stroke-width="1.400"/><path d="M14 15h10l-5 5.500z" fill="#000"/>',
  crs: '<circle cx="11" cy="11" r="9.500" fill="#c9d4dc" stroke="#7a8a96"/><path d="M11 1.500v19M1.500 11h19M3 6h16M6 2.500c-2 6-2 11 0 17M16 2.500c2 6 2 11 0 17" fill="none" stroke="#7a8a96"/><path d="M2 13h18c-2 8-15 9-18 0z" fill="#6db4ee"/><rect x="13" y="13" width="11" height="11" fill="#d9a522"/><path d="M16 21l5-5" stroke="#fff" stroke-width="2"/>',
  grid: '<path d="M12 1c7 0 11 5 11 11H1C1 6 5 1 12 1zM3 13h18c-1 6-5 10-9 10s-8-4-9-10z" fill="#777"/><path d="M12 1.500v21M1.500 12h21M3 7h18M3 17h18M8 2c-3 7-3 13 0 20M16 2c3 7 3 13 0 20" fill="none" stroke="#e8e8e8" stroke-width="1.200"/>',
  bubble: '<path d="M12 2c14 0 14 17 3 18.500L13 24l-3-3.500C-2 19-2 2 12 2z" fill="#666"/><g fill="#fff"><circle cx="7" cy="11" r="1.600"/><circle cx="12" cy="11" r="1.600"/><circle cx="17" cy="11" r="1.600"/></g>',
  mouse: '<path d="M3 5l6-2 9 9c2 4-2 8-6 6L3 9zM10 4l7-2M6 2l12 12" fill="#ccc" stroke="#333" stroke-width="2"/><path d="M2 12l8 9 6 1" stroke="#333" stroke-width="2" fill="none"/>',
  search: '<circle cx="9.500" cy="9" r="7" fill="none" stroke="#888" stroke-width="1.800"/><path d="M15 14.500l7 7.500" stroke="#888" stroke-width="2.500"/>',
  mic: '<rect x="8" y="2" width="8" height="13" rx="1.500" fill="none" stroke="#222" stroke-width="1.500"/><path d="M5 11v7h14v-7M12 18v4M8.500 22.500h7" fill="none" stroke="#222" stroke-width="1.500"/>',
  taskview: '<g fill="none" stroke="#fff" stroke-width="1.400"><path d="M3 2v3.500h12V2M3 22v-3.500h12V22"/><rect x="3" y="8.500" width="12" height="7"/><path d="M20 2v20"/></g><rect x="18.500" y="7" width="3" height="3.500" fill="#fff"/>',
  edge: '<path d="M1 11C2 4 7 1 12.500 1 19 1 23 5.500 23 11.500V14H8.500c.3 4 4 5.500 7.500 5.500 2 0 4-.5 6-1.700v5c-2 1-4.500 1.500-7 1.500C8 24.300 3.500 20.500 3.500 15c0-4 2-7 5.500-8.500C5.500 6.500 2.500 8.500 1 11zm7.500-1H16c0-3-1.500-4.500-3.700-4.500S8.700 7.500 8.500 10z" fill="#0a78d7"/>',
  explorer: '<path d="M1 3h8l2 2.500h12V22H1z" fill="#f5c65a"/><path d="M1 7h22v15H1z" fill="#ffe59a"/><path d="M5 23v-9h14v9h-4v-5H9v5z" fill="#38b0e8"/>',
  ie: '<path d="M3.500 13a9 9 0 0 1 18-1v2.500H9c.3 3 2 4 4 4 1.700 0 3-.7 3.500-2h5a9 9 0 0 1-18-3.500zM9 11h7c0-2-1.500-3.300-3.500-3.300S9 9 9 11z" fill="#5fd0f7"/><path d="M4 21.500C-1 24 .5 17 6 10.500 12 3.500 20 0 22.500 2.500c1 1 .5 3-1 5" fill="none" stroke="#f7c42a" stroke-width="2"/>',
  firefox: '<circle cx="12" cy="12.500" r="10.500" fill="#ff9a1a"/><circle cx="12.500" cy="12" r="6.500" fill="#3a5fd0"/><path d="M2 8c0 10 6 11 12 9 3-1 4-4 3-6 3 1 5-3 3-8 6 7 4 20-8 20C4 23 0 16 2 8z" fill="#f0402a"/><path d="M14 1c4 2 9 6 8.500 12-.5 6-5 9-9 9 5-3 7-6 5-12-1-3-4-5-4.500-9z" fill="#ffd42a"/><path d="M2 8c1-2 2-3 3-4 1 2 3 2 5 3-2 2-3 3-1 5-3 0-6-1-7-4z" fill="#ff7a1a"/>',
  people: '<g fill="none" stroke="#e6ebf0" stroke-width="1.600"><circle cx="8" cy="11" r="3.500"/><path d="M2 22c0-5 3-7 6-7s5 2 5 6"/><circle cx="16.500" cy="5.500" r="3.500"/><path d="M14 10c4-1 7 1 7.500 5"/></g>',
  up: '<path d="M3 16l9-9 9 9" fill="none" stroke="#fff" stroke-width="1.800"/>',
  cloud: '<path d="M6 20c-6 0-6-7-1-8 0-6 8-8 11-3 4-1 6 2 5.500 4 3 1 3 7-1.500 7z" fill="#0a78d7"/>',
  net: '<g fill="none" stroke="#fff" stroke-width="1.500"><path d="M7 4h16v12H7M15 16v5M10 21h9"/><path d="M1.500 3.500h5v5h-5zM4 8.500V21"/></g>',
  sound: '<g fill="none" stroke="#fff" stroke-width="1.400"><path d="M1.500 9v6h3l4.500 4V5L4.500 9zM12 9q2 3 0 6M15.500 6.500q3.500 5.500 0 11M19 4q5 8 0 16"/></g>',
  win: '<path d="M1 4.500l9-1.300v8.300H1zM11 3l12-1.700v10.200H11zM1 12.500h9v8.300l-9-1.300zM11 12.500h12v10.200L11 21z" fill="#fff"/>',
  notif: '<path d="M2 2h20v16h-8l-4 4v-4H2z" fill="#fff"/><path d="M5 6.500h14M5 10h14M5 13.500h14" stroke="#0a2a48" stroke-width="1.500"/>',
  chevR: '<path d="M8 4l8 8-8 8" fill="none" stroke="#a0a0a0" stroke-width="3.500"/>',
  chevD: '<path d="M3 8l9 9 9-9" fill="none" stroke="#333" stroke-width="3.500"/>',
  chevDs: '<path d="M4 8l8 8 8-8" fill="none" stroke="#555" stroke-width="2.200"/>',
  chevDg: '<path d="M4 8l8 8 8-8" fill="none" stroke="#aaa" stroke-width="2.200"/>',
  chevU: '<path d="M3 16l9-9 9 9" fill="none" stroke="#444" stroke-width="4"/>',
  tri: '<path d="M2 7h20L12 19z" fill="#111"/>',
  float: '<path d="M8 3h13v11h-5M8 3v5M3 9h13v12H3z" fill="none" stroke="#000" stroke-width="2.200"/><path d="M3 10h13M8 4h13" stroke="#000" stroke-width="3.500"/>',
  x: '<path d="M3.500 3.500l17 17M20.500 3.500l-17 17" stroke="#000" stroke-width="4"/>',
}
const Ic = (p) =>
  h('svg', { viewBox: '0 0 24 24', width: p.s || 23, height: p.h || p.s || 23, innerHTML: ICONS[p.n], preserveAspectRatio: 'none', style: 'flex:none;display:block' })
Ic.props = ['n', 's', 'h']

/* ---------- main window ---------- */
const menu = [['Project', 34], ['Edit', 18], ['View', 22], ['Layer', 27], ['Settings', 39], ['Plugins', 33], ['Vector', 30], ['Raster', 32], ['Database', 47], ['Web', 22], ['Processing', 51], ['Help', 21]]
/* '!' marks a pressed button, 'v' a drop-down arrow, '|' a thin divider */
const bar1 = [
  { w: 199, b: ['page', 'folder', 'floppy', 'floppyEdit', 'newLayout', 'layoutMgr'] },
  { w: 444, b: ['!hand', 'pan', 'zoomIn', 'zoomOut', 'zoom11g', 'zoomFull', 'zoomSel', 'zoomLayer', 'zoomLast', 'zoomNext', 'mapNew', 'bookNew', 'book', 'refresh'] },
  { w: 0, b: ['identify', 'action', 'v', 'select', 'v', 'selForm', 'v', 'deselect', 'table', 'abacus', '!gear', 'sigma', 'measure', 'v', 'tip', 'textNote', 'v'] },
]
const bar2 = [
  { w: 167, b: ['dsm', 'gpkgNew', 'shpNew', 'featherNew', 'memory'] },
  { w: 382, b: ['pencils', '!pencil', 'saveEdits', 'polyNew', 'vertex', 'multiEdit', 'trash', 'cut', 'copy', 'paste', 'undo', 'redo'] },
  { w: 260, b: ['label', 'diagram', 'labelPin', 'labelG1', 'labelG2', 'labelG3', 'labelG4', 'labelG5'] },
  { w: 74, b: ['triangle', 'globeFind'] },
  { w: 74, b: ['python', 'dots3'] },
  { w: 44, b: ['help'] },
  { w: 0, b: [] },
]
const browser = [
  ['', 'fav', 'Favorites', 45], ['chevR', 'home', 'Project Home', 64], ['chevR', 'dir', 'Home', 27], ['chevR', 'dir', 'C:\\', 16], ['chevR', 'dir', 'D:\\', 17], ['chevR', 'dir', 'H:\\', 17], ['chevR', 'dir', 'I:\\', 14],
  ['', 'gpkg', 'GeoPackage', 59], ['', 'feather', 'SpatiaLite', 47], ['', 'postgis', 'PostGIS', 38], ['', 'mssql', 'MSSQL', 33], ['', 'oracle', 'Oracle', 31], ['', 'db2', 'DB2', 20], ['', 'globe', 'WMS/WMTS', 58], ['chevD', 'globe', 'XYZ Tiles', 42],
]
const xyz = [['Bing VirtualEarth', 79], ['CartoDb Dark Matter', 100], ['CartoDb Positron', 82], ['Esri Boundaries Places', 106], ['Esri Gray (dark)', 75], ['Esri Gray (light)', 74], ['Esri National Geographic', 117]]
const classes = [['solid', 'A1.1.1 - Broadleaved w', 114], ['green', 'A1.1.2 - Broadleaved w', 114], ['orange', 'B1.1 - Acid grassland - u', 117], ['si', 'B1.2 - Acid grassland - s', 117]]
const layers = [['poly', 'Difference', 58], ['poly', 'Buffered', 48], ['tiles', 'Google Satellite', 89], ['line', 'lines', 26], ['polyEditO', 'phase1_test', 71], ['tiles', 'OpenStreetMap Monoch', 136], ['tiles', 'OpenStreetMap', 89], ['tiles', 'Esri Gray (light)', 88], ['poly', 'sssi', 21], ['tiles', 'dtm', 23], ['tiles', 'dsm', 24]]
const toolbox = [['oints inside polygons', 98], ['r values to points', 81], ['ng average)', 58], [' metrics)', 38], [''], ['o singleparts', 60], [''], [''], [''], [''], [''], [''], ['sis', 10], ['s', 3], ['analysis', 37], [''], ['s', 3], ['n', 5], [''], ['ry', 9], [''], ['n', 5]]

/* ---------- layout window ---------- */
const menu2 = [['Layout', 34], ['Edit', 19], ['View', 22], ['Items', 27], ['Add Item', 44], ['Atlas', 24], ['Settings', 39]]
const lbar1 = ['floppy', '|', 'newLayout', 'dupLayout', 'layoutMgr', 'folder', 'floppyEdit', '|', 'newPage', '|', 'print', 'imgOut', 'svgOut', 'pdfOut', 'undo', 'redo']
const lbar2 = [
  { w: 167, b: ['zoomIn', 'zoomOut', 'zoom11', 'zoomFull', 'refresh'] },
  { w: 0, b: ['lock', 'unlock', 'group', 'ungroup', 'raise', 'align', 'distribute', 'resize'] },
]
const side = ['hand', 'zoomArea', 'selItem', 'moveContent', 'editNodes', 'addMap', 'addPic', 'addLabel', '!legend', 'scalebar', 'shape', 'arrow', 'addNodes', 'html', 'addTable']

const MM = 2.893
const ticks = (from, to, origin) => {
  const out = []
  for (let mm = -38; mm <= 360; mm += 2) {
    const p = origin + mm * MM
    if (p >= from && p <= to) out.push({ p: Math.round(p) + 0.5, mm, len: mm % 20 === 0 ? 19 : mm % 10 === 0 ? 8 : 4 })
  }
  return out
}
const hTicks = ticks(2, 1108, 132.5)
const vTicks = ticks(2, 697, 44)

const pts = (s) => s.split(' ').map((c) => { const [x, y] = c.split(',').map(Number); return (x / 2.6133 - 7).toFixed(1) + ',' + (y / 3 - 21).toFixed(1) }).join(' ')
const outline = pts('403,286 478,312 497,302 453,292 550,316 840,378 1362,722 1473,795 1447,840 1370,970 1330,1037 1285,1115 1230,1208 925,1216 905,1209 835,1218 750,1221 370,1268 118,1025 54,970 57,662 125,595 245,460 310,390')
const wood = pts('512,298 1130,643 1402,758 1396,800 1370,975 1362,1033 950,1057 615,883 535,818 485,785 330,652 257,581 450,370 482,318 497,308')
const scrub = pts('270,600 330,652 490,785 530,812 510,815 295,950 140,810 100,755')
const plant = pts('510,815 535,818 615,883 681,1107 385,1180 255,1083 295,950')
const roads = [
  '400,262 482,313 550,350 630,400 720,438 775,475 812,505 855,545 880,582 925,630 955,652 990,668 1080,690 1170,712 1220,732 1280,744 1325,772 1425,812 1455,835',
  '1280,744 1320,740 1375,720', '1422,757 1432,775 1450,833',
  '482,313 390,495 350,605 332,650 285,720 270,757',
  '812,505 770,560 730,598 635,632 605,675 570,725 543,762 538,806',
  '735,598 780,595 835,598 865,592 882,585', '543,762 525,761 505,772 483,803',
  '45,856 95,847 160,795 170,768 268,758 310,825 345,860 370,863 440,825 480,803 540,808 585,830 635,870 690,885 760,893 828,893 870,915 920,928 950,945 985,946 1015,940 1050,945 1110,968 1165,982 1225,1010 1280,1018 1305,1020 1340,1038',
  '345,860 330,890 290,918 225,938 190,980 112,1031',
  '1380,978 1340,988 1300,997 1280,1018 1270,1050 1272,1105 1215,1160 1120,1170 1030,1180 900,1216',
  '1272,1105 1300,1098', '1160,1168 1152,1218',
].map(pts)
const lanes = ['118,590 122,640 132,700 170,768', '62,648 85,715 98,765 122,808', '75,637 103,660 86,705', '95,765 97,800 84,838', '304,388 292,463 238,460'].map(pts)
const handles = [[1, 1], [281, 1], [561, 1], [1, 234], [561, 234], [1, 467], [281, 467], [561, 467]]
</script>

<template>
  <div class="screen">
    <header class="title">
      <Ic n="qgis" :s="17" /><span v-fit="62" class="t">*hh1 - QGIS</span>
      <div class="wbtns grey"><i class="min"></i><i class="rest"></i><i class="cls"></i></div>
    </header>
    <nav class="menu dim"><span v-for="m in menu" :key="m[0]" v-fit="m[1]" class="t">{{ m[0] }}</span></nav>
    <div v-for="(bar, k) in [bar1, bar2]" :key="k" class="bar">
      <div v-for="(g, i) in bar" :key="i" class="seg" :class="{ last: !g.w }" :style="g.w ? { width: g.w + 'px' } : null">
        <i class="grip"></i>
        <template v-for="(b, j) in g.b" :key="j">
          <span v-if="b === 'v'" class="dd"><Ic n="tri" :s="9" /></span>
          <span v-else class="btn" :class="{ on: b[0] === '!' }"><Ic :n="b.replace('!', '')" :s="23" /></span>
        </template>
      </div>
    </div>

    <main class="desk">
      <section class="left">
        <div class="dock-t"><span v-fit="38" class="t">Browser</span></div>
        <div class="mini"><Ic v-for="n in ['boxAdd', 'refresh', 'filter', 'collapse', 'info']" :key="n" :n="n" :s="15" /></div>
        <div class="tree browser">
          <div v-for="r in browser" :key="r[2]" class="row">
            <span class="chev"><Ic v-if="r[0]" :n="r[0]" :s="9" /></span><Ic :n="r[1]" :s="16" /><span v-fit="r[3]" class="t">{{ r[2] }}</span>
          </div>
          <div v-for="r in xyz" :key="r[0]" class="row sub"><Ic n="tiles" :s="16" /><span v-fit="r[1]" class="t">{{ r[0] }}</span></div>
          <div class="row sub"><Ic n="tiles" :s="16" /></div>
        </div>
        <div class="dock-t second"><span v-fit="32" class="t">Layers</span></div>
        <div class="mini lay">
          <Ic n="brush" :s="15" /><Ic n="group2" :s="15" /><Ic n="eyeDrop" :s="16" /><span class="fbtn"><Ic n="filter" :s="15" /></span>
          <Ic n="epsilon" :s="16" /><Ic n="tri" :s="8" class="tr" /><Ic n="expand" :s="15" /><Ic n="collapse" :s="15" /><Ic n="boxDel" :s="15" />
        </div>
        <div class="tree layers">
          <div class="row"><span class="chev"><Ic n="chevD" :s="9" /></span><div class="cur"><i class="cb ck"></i><Ic n="polyEdit" :s="16" /><b v-fit="67" class="t u">Single parts</b></div></div>
          <div v-for="c in classes" :key="c[1]" class="row cl">
            <i class="cb ck"></i>
            <svg class="sym" width="18" height="18" viewBox="0 0 18 18">
              <rect x=".5" y=".5" width="17" height="17" :fill="c[0] === 'solid' ? '#008000' : '#efefef'" :stroke="c[0] === 'solid' ? '#0b4d0b' : '#777'" />
              <path v-if="c[0] !== 'solid'" :d="c[0] === 'green' ? 'M1 11L11 1M8 17L17 8' : 'M1 13L13 1M6 17L17 6'" :stroke="c[0] === 'green' ? '#128a12' : '#ffa500'" stroke-width="1.5" />
              <g v-if="c[0] === 'si'"><rect x=".5" y=".5" width="17" height="17" fill="none" stroke="#000" stroke-dasharray="2 2" /><path d="M3 1v4" stroke="#000" /><text x="6" y="14" font-size="10">s</text></g>
            </svg>
            <span v-fit="c[2]" class="t">{{ c[1] }}</span>
          </div>
          <div v-for="l in layers" :key="l[1]" class="row ly"><i class="cb"></i><Ic :n="l[0]" :s="16" /><b v-fit="l[2]" class="t">{{ l[1] }}</b></div>
        </div>
      </section>
      <section class="center"></section>
      <section class="right">
        <div class="dock-t"><span class="dk"><Ic n="float" :s="9" /><Ic n="x" :s="9" /></span></div>
        <div class="gap"></div>
        <div class="find"></div>
        <div class="tree tb"><div v-for="(r, i) in toolbox" :key="i" class="row"><span v-fit="r[1]" class="t">{{ r[0] }}</span></div></div>
      </section>
    </main>

    <footer class="status">
      <div class="locate"><Ic n="search" :s="13" /><span v-fit="111" class="t">Type to locate (Ctrl+K)</span></div>
      <span v-fit="124" class="t msg">1 legend entries removed.</span>
      <span v-fit="53" class="t">Coordinate</span><div class="inp" style="width: 99px"><span v-fit="90" class="t">417492.1,90808.1</span></div>
      <Ic n="mouse" :s="15" class="ms" />
      <span v-fit="26" class="t">Scale</span><div class="inp" style="width: 78px"><span v-fit="34" class="t">1:1644</span><Ic n="chevDs" :s="10" class="e" /></div>
      <Ic n="padG" :s="17" class="lk" />
      <span v-fit="44" class="t">Magnifier</span><div class="inp" style="width: 82px"><span v-fit="28" class="t">100%</span><i class="spin"></i></div>
      <span v-fit="42" class="t rot">Rotation</span><div class="inp" style="width: 80px; margin-left: 9px"><span v-fit="26" class="t">0.0 °</span><i class="spin"></i></div>
      <i class="cb ck rn"></i><span v-fit="35" class="t">Render</span>
      <Ic n="grid" :s="14" class="gd" /><span v-fit="59" class="t">EPSG:27700</span><Ic n="bubble" :s="16" class="bb" />
    </footer>

    <div class="task">
      <div class="start"><Ic n="win" :s="17" /></div>
      <div class="search"><i class="ring"></i><span v-fit="128" class="t">Type here to search</span><Ic n="mic" :s="17" class="mic" /></div>
      <div class="app tv"><Ic n="taskview" :s="18" /></div>
      <div class="app"><Ic n="edge" :s="21" /></div>
      <div class="app"><Ic n="explorer" :s="22" :h="19" /></div>
      <div class="app run"><Ic n="ie" :s="23" /></div>
      <div class="app act"><Ic n="qgis" :s="23" /></div>
      <div class="app run"><Ic n="firefox" :s="22" /></div>
      <div class="tray">
        <Ic n="people" :s="16" /><Ic n="up" :s="13" class="a1" /><Ic n="cloud" :s="16" class="a2" /><Ic n="net" :s="17" class="a3" /><Ic n="sound" :s="17" class="a4" />
        <div class="clock"><span v-fit="27" class="t">16:30</span><span v-fit="58" class="t">25/09/2018</span></div>
        <div class="nt"><Ic n="notif" :s="17" /><i>1</i></div>
      </div>
    </div>

    <!-- print layout window -->
    <div class="win">
      <header class="title t2">
        <Ic n="qgis" :s="16" /><span v-fit="41" class="t">*phase1</span>
        <div class="wbtns"><i class="min"></i><i class="max"></i><i class="cls"></i></div>
      </header>
      <nav class="menu m2"><span v-for="m in menu2" :key="m[0]" v-fit="m[1]" class="t">{{ m[0] }}</span></nav>
      <div class="bar">
        <div class="seg" style="width: 433px">
          <i class="grip"></i>
          <template v-for="(b, j) in lbar1" :key="j"><i v-if="b === '|'" class="sep"></i><span v-else class="btn"><Ic :n="b" :s="23" /></span></template>
        </div>
        <div class="seg last pgs">
          <i class="grip"></i>
          <span class="btn"><Ic n="atlas" :s="24" /></span><span class="btn"><Ic n="first" :s="21" /></span><span class="btn"><Ic n="prev" :s="20" /></span>
          <div class="pg"><span>1</span><Ic n="chevDg" :s="10" /></div>
          <span class="btn"><Ic n="next" :s="20" /></span><span class="btn"><Ic n="last" :s="21" /></span><span class="btn"><Ic n="printG" :s="21" /></span><span class="btn"><Ic n="atlasOut" :s="23" /></span><span class="btn"><Ic n="atlasSet" :s="24" /></span>
        </div>
      </div>
      <div class="bar">
        <div v-for="(g, i) in lbar2" :key="i" class="seg" :class="{ last: !g.w }" :style="g.w ? { width: g.w + 'px' } : null">
          <i class="grip"></i><span v-for="b in g.b" :key="b" class="btn"><Ic :n="b" :s="22" /></span>
        </div>
      </div>
      <div class="work">
        <div class="side">
          <i class="hgrip"></i>
          <span v-for="b in side" :key="b" class="sb" :class="{ on: b[0] === '!' }"><Ic :n="b.replace('!', '')" :s="23" /></span>
        </div>
        <div class="view">
          <svg class="hr" width="1109" height="19">
            <g v-for="k in hTicks" :key="k.mm"><path :d="`M${k.p} 19v${-k.len}`" stroke="#333" /><text v-if="k.mm % 20 === 0" :x="k.p + 1.500" y="11">{{ k.mm }}</text></g>
            <path d="M20.500 0v19" stroke="#f00" />
          </svg>
          <div class="vrow">
            <svg class="vr" width="19" height="698">
              <g v-for="k in vTicks" :key="k.mm"><path :d="`M19 ${k.p}h${-k.len}`" stroke="#333" /><text v-if="k.mm % 20 === 0 && k.mm >= 0" :transform="`translate(11.500 ${k.p + 3}) rotate(-90)`" text-anchor="end">{{ k.mm }}</text></g>
              <path d="M0 258.500h19" stroke="#f00" />
            </svg>
            <div class="canvas">
              <div class="paper">
                <svg class="map" width="572" height="478" viewBox="0 0 572 478">
                  <defs>
                    <pattern id="ho" width="7.700" height="7.700" patternUnits="userSpaceOnUse" patternTransform="rotate(45)"><rect width="7.700" height="7.700" fill="#efefef" /><rect width="1.400" height="7.700" fill="#ffa81a" /></pattern>
                    <pattern id="hg" width="7.200" height="7.200" patternUnits="userSpaceOnUse" patternTransform="rotate(45)"><rect width="7.200" height="7.200" fill="#efefef" /><rect width="1.500" height="7.200" fill="#0c8a0c" /></pattern>
                    <pattern id="si" width="14.200" height="14.500" patternUnits="userSpaceOnUse" x="6" y="3"><text x="0" y="6" class="si">SI</text><text x="7" y="13.200" class="si">SI</text></pattern>
                    <clipPath id="land"><polygon :points="outline" /><polygon :points="wood" /></clipPath>
                  </defs>
                  <polygon :points="outline" fill="url(#ho)" stroke="#444" stroke-width=".8" />
                  <polygon :points="scrub" fill="url(#si)" stroke="#222" stroke-width=".9" />
                  <polygon :points="plant" fill="url(#hg)" stroke="#222" stroke-width=".9" />
                  <polygon :points="wood" fill="#008000" stroke="#222" stroke-width=".8" />
                  <g clip-path="url(#land)" fill="none" stroke="#333" stroke-linejoin="round"><polyline v-for="r in roads" :key="r" :points="r" stroke-width="5.400" /><polyline v-for="r in lanes" :key="r" :points="r" stroke-width="4.600" /></g>
                  <g fill="none" stroke="#fff" stroke-linejoin="round"><polyline v-for="r in roads" :key="r" :points="r" stroke-width="3.800" /><polyline v-for="r in lanes" :key="r" :points="r" stroke-width="3.200" /></g>
                  <rect v-for="(p, i) in handles" :key="i" :x="p[0] - .5" :y="p[1] - .5" width="10" height="10" fill="#fff" stroke="#2f8ccc" />
                  <rect x=".5" y=".5" width="571" height="477" fill="none" stroke="#2f8ccc" /><rect x=".5" y=".5" width="571" height="477" fill="none" stroke="#5e0030" stroke-dasharray="4 2" />
                </svg>
              </div>
            </div>
          </div>
        </div>
        <aside class="props">
          <div class="tabs"><span class="tab on"><span v-fit="25" class="t">Items</span></span><span class="tab"><span v-fit="62" class="t">Undo History</span></span></div>
          <div class="dock-t it"><span v-fit="27" class="t">Items</span><span class="dk"><Ic n="float" :s="9" /><Ic n="x" :s="9" /></span></div>
          <div class="ilist">
            <div class="ih"><span><Ic n="eye" :s="15" /></span><span><Ic n="padG" :s="17" /></span><span><em v-fit="22" class="t">Item</em></span></div>
            <div class="ir"><i class="cb ck"></i><i class="cb"></i><Ic n="sheet" :s="14" /><b v-fit="34" class="t">Map 1</b></div>
          </div>
          <div class="ip">
            <div class="ipt"><span v-fit="80" class="t">Item Properties</span><i>x</i></div>
            <div class="ipm"><b v-fit="34" class="t">Map 1</b></div>
            <div class="scroll">
              <div class="form">
                <div class="grp g1">
                  <div class="gt"><Ic n="tri" :s="12" /><b v-fit="89" class="t">Main properties</b></div>
                  <div class="push"><span v-fit="76" class="t">Update preview</span></div>
                  <div class="f"><label><span v-fit="25" class="t">Scale</span></label><div class="in"><span v-fit="24" class="t">2910</span></div><Ic n="override" :s="22" :h="18" /></div>
                  <div class="f"><label><span v-fit="61" class="t">Map rotation</span></label><div class="in"><span v-fit="31" class="t">0.00 °</span><i class="spin"></i></div><Ic n="override" :s="22" :h="18" /></div>
                  <div class="f c"><label><span v-fit="20" class="t">CRS</span></label><div class="cmb"><span v-fit="78" class="t">Use project CRS</span><Ic n="tri" :s="8" /></div><span class="sq"><Ic n="crs" :s="16" /></span></div>
                  <div class="ck-row d"><i class="cb ck"></i><span v-fit="114" class="t">Draw map canvas items</span></div>
                </div>
                <div class="grp g2">
                  <div class="gt"><Ic n="tri" :s="12" /><b v-fit="38" class="t">Layers</b></div>
                  <div class="f k"><div class="ck-row"><i class="cb"></i><span v-fit="87" class="t">Follow map theme</span></div><div class="cmb n"><span v-fit="32" class="t">(none)</span><Ic n="tri" :s="8" /></div><Ic n="override" :s="22" :h="18" /></div>
                  <div class="f k"><div class="ck-row"><i class="cb"></i><span v-fit="54" class="t">Lock layers</span></div><span class="sq n"><Ic n="eyeDrop" :s="16" /></span><Ic n="override" :s="22" :h="18" /></div>
                  <div class="ck-row off"><i class="cb"></i><span v-fit="102" class="t">Lock styles for layers</span></div>
                </div>
                <div class="grp g3">
                  <div class="gt"><Ic n="tri" :s="12" /><b v-fit="44" class="t">Extents</b></div>
                  <div v-for="e in [['X min', '417486.027', 59, 25], ['Y min', '90407.438', 53, 25], ['X max', '418059.327', 59, 29], ['Y max', '90886.259', 53, 29]]" :key="e[0]" class="f x">
                    <label><span v-fit="e[3]" class="t">{{ e[0] }}</span></label><div class="in"><span v-fit="e[2]" class="t">{{ e[1] }}</span></div><Ic n="override" :s="22" :h="18" />
                  </div>
                </div>
              </div>
              <div class="sbar"><Ic n="chevU" :s="9" /><i></i><Ic n="chevD" :s="9" class="dn" /></div>
            </div>
          </div>
        </aside>
      </div>
      <footer class="wst">
        <span v-fit="71" class="t s1">1 item selected</span><span v-fit="38" class="t s2">x: 0 mm</span><span v-fit="44" class="t s3">y: 74 mm</span><span v-fit="38" class="t s4">page: 1</span>
        <div class="inp z"><span v-fit="33" class="t">76.6%</span><Ic n="chevDs" :s="10" class="e" /></div>
        <div class="slide"><i></i></div>
        <svg class="rz" width="8" height="8" fill="#b4b4b4"><path d="M6 0h2v2H6zM3 3h2v2H3zM6 3h2v2H6zM0 6h2v2H0zM3 6h2v2H3zM6 6h2v2H6z" /></svg>
      </footer>
      <div class="tipbox"><span v-fit="159" class="t">Adds a new Legend to the layout</span></div>
    </div>
  </div>
</template>

<style>
html, body { margin: 0; overflow: hidden; }
</style>

<style scoped>
* { box-sizing: border-box; }
i, em { font-style: normal; }
.screen { position: relative; width: 1920px; height: 1080px; display: flex; flex-direction: column; background: #f0f0f0; color: #000; font: 11px/14px 'DejaVu Sans Condensed', 'Noto Sans', sans-serif; overflow: hidden; }
.t { display: inline-block; white-space: pre; flex: none; }
.title { display: flex; align-items: center; height: 23px; padding-left: 2px; background: #fff; color: #8f8f8f; font: 12px/16px 'Open Sans', 'Noto Sans', sans-serif; flex: none; }
.title .t { margin-left: 4px; }
.wbtns { margin-left: auto; display: flex; gap: 35px; padding-right: 20px; color: #000; align-items: center; }
.wbtns i { width: 10px; height: 10px; display: block; position: relative; }
.wbtns.grey { color: #8f8f8f; }
.min::before { content: ''; position: absolute; left: 0; right: 0; top: 5px; height: 1px; background: currentColor; }
.max { border: 1px solid currentColor; }
.rest::before { content: ''; position: absolute; inset: 2px 2px 0 0; border: 1px solid currentColor; }
.rest::after { content: ''; position: absolute; inset: 0 0 2px 2px; border: solid currentColor; border-width: 1px 1px 0 0; }
.cls::before, .cls::after { content: ''; position: absolute; left: -2px; top: 4.500px; width: 14px; height: 1px; background: currentColor; transform: rotate(45deg); }
.cls::after { transform: rotate(-45deg); }
.menu { display: flex; gap: 16px; align-items: center; height: 18px; padding: 2px 0 0 7px; background: #fff; font: 12px/16px 'Open Sans', 'Noto Sans', sans-serif; flex: none; }
.dim { color: #8f8f8f; }
.bar { display: flex; height: 34px; flex: none; border-top: 1px solid #fff; border-bottom: 1px solid #b4b4b4; background: #f0f0f0; }
.seg { display: flex; align-items: center; flex: none; border-right: 1px solid #b4b4b4; padding-left: 4px; }
.seg + .seg { border-left: 1px solid #fff; padding-left: 4px; }
.seg.last { flex: 1; border-right: 0; }
.seg.pgs { padding-left: 3px; }
.grip { width: 2px; height: 26px; margin-right: 3px; background: repeating-linear-gradient(#b0b0b0 0 2px, transparent 2px 4px); flex: none; }
.btn { width: 31px; height: 29px; display: flex; align-items: center; justify-content: center; flex: none; }
.on { background: #c0dcf3; border: 1px solid #90c8f6; }
.dd { width: 12px; display: flex; justify-content: center; flex: none; }
.sep { width: 1px; height: 24px; background: #c4c4c4; margin: 0 2.500px; flex: none; }
.desk { flex: 1; display: flex; min-height: 0; padding-top: 2px; }
.dock-t { height: 19px; background: #d9d9d9; border: 1px solid #b8b8b8; display: flex; align-items: center; padding: 2px 3px 0; flex: none; }
.dk { margin-left: auto; display: flex; gap: 7px; padding: 0 1px 2px 0; }
.left { width: 294px; display: flex; flex-direction: column; }
.mini { height: 28px; display: flex; align-items: center; gap: 8px; padding: 1px 0 0 5px; flex: none; }
.tree { background: #fff; border: 1px solid #828790; overflow: hidden; }
.browser { height: 447px; padding-top: 2px; flex: none; }
.row { height: 20px; display: flex; align-items: center; }
.row .t { margin-left: 5px; }
.browser .row svg { margin-top: -2px; }
.chev { width: 23px; padding-left: 5px; flex: none; }
.sub { padding-left: 43px; }
.second { margin-top: 5px; padding-top: 3px; }
.lay { gap: 0; }
.lay > * { margin-right: 8px; }
.lay .fbtn { width: 23px; height: 22px; margin: 0 4px 0 -3px; display: flex; align-items: center; justify-content: center; background: #c0dcf3; border: 1px solid #90c8f6; }
.lay .tr { margin: 0 9px 0 -2px; }
.layers { flex: 1; padding-top: 1px; }
.cur { display: flex; align-items: center; background: #d9d9d9; flex: 1; height: 20px; margin-left: -3px; padding-left: 3px; }
.u { text-decoration: underline; }
.cb { width: 13px; height: 13px; border: 1px solid #333; background: #fff; display: block; flex: none; position: relative; }
.ck::after { content: ''; position: absolute; left: 2px; top: 1.500px; width: 8px; height: 4px; border: solid #333; border-width: 0 0 1.300px 1.300px; transform: rotate(-47deg); }
.row .cb { margin-top: -1px; }
.cur svg { margin: -1px 0 0 6px; }
.cl { padding-left: 43px; }
.sym { margin-left: 6px; flex: none; }
.ly { padding-left: 23px; color: #b9b9b9; }
.ly svg { margin: -2px 0 0 6px; }
.row .t { padding-top: 1px; }
.center { width: 1320px; margin-left: 4px; background: #fff; border: 1px solid #828790; }
.right { flex: 1; margin-left: 4px; display: flex; flex-direction: column; }
.gap { height: 28px; }
.find { height: 20px; background: #fff; border: 1px solid #6f6f6f; flex: none; }
.tb { flex: 1; padding: 16px 0 0 108px; }
.status { height: 27px; display: flex; align-items: center; padding-left: 4px; flex: none; }
.status .t { padding-top: 1px; }
.locate, .inp { height: 20px; border: 1px solid #6f6f6f; background: #fff; display: flex; align-items: center; padding: 1px 3px 0; flex: none; }
.locate { width: 200px; padding-left: 8px; color: #777; gap: 6px; }
.msg { margin: 0 795px 0 8px; }
.status .inp { margin-left: 4px; }
.ms { margin: 0 12px 0 5px; }
.lk { margin: 0 9px 0 3px; }
.rot { margin-left: 9px; }
.rn { margin: 0 4px 0 6px; }
.gd { margin: 0 5px 0 18px; }
.bb { margin-left: 17px; }
.e { margin-left: auto; margin-right: 0; }
.spin { margin-left: auto; width: 14px; height: 17px; border: 1px solid #c4c4c4; background: linear-gradient(#ececec 7px, #c4c4c4 7px 8px, #ececec 8px); position: relative; margin-right: -2px; margin-top: -1px; }
.spin::before, .spin::after { content: ''; position: absolute; left: 3px; border: 3px solid transparent; }
.spin::before { top: -1px; border-bottom-color: #222; }
.spin::after { bottom: -1px; border-top-color: #222; }
.task { height: 40px; display: flex; flex: none; background: linear-gradient(90deg, #06253f, #052c50 55%, #07294a 75%, #092540); color: #fff; }
.start { width: 48px; display: flex; align-items: center; justify-content: center; }
.search { width: 344px; background: #f2f3f5; display: flex; align-items: center; padding-left: 10px; color: #444; font: 15px/20px 'Open Sans', 'Noto Sans', sans-serif; border-top: 1px solid #c8c8c8; }
.search > * { margin-top: -1px; }
.ring { width: 21px; height: 21px; border: 3px solid #111; border-radius: 50%; margin-right: 9px; }
.mic { margin-left: 147px; }
.app { width: 49px; display: flex; align-items: center; justify-content: center; position: relative; flex: none; }
.app.tv { width: 50px; }
.app.run::after { content: ''; position: absolute; left: 5px; right: 4px; bottom: 0; height: 2px; background: #8fc4ee; }
.app.act { background: #0a4f8c; border-bottom: 2px solid #8fc4ee; border-right: 1px solid #06335e; }
.tray { margin-left: auto; display: flex; align-items: center; width: 251px; flex: none; }
.a1 { margin-left: 21px; } .a2 { margin-left: 10px; } .a3 { margin-left: 7px; } .a4 { margin-left: 7px; }
.clock { display: flex; flex-direction: column; align-items: center; width: 60px; margin-left: 8px; font: 12px/18px 'Open Sans', 'Noto Sans', sans-serif; }
.nt { position: relative; margin-left: 17px; }
.nt i { position: absolute; left: 8px; top: 8px; width: 15px; height: 15px; border-radius: 50%; background: #0a4f8c; border: 1px solid #b8cbe0; font: 11px/13px 'Open Sans', sans-serif; text-align: center; }

.win { position: absolute; left: 199px; top: 104px; width: 1538px; height: 864px; border: 1px solid #1883d7; background: #f0f0f0; display: flex; flex-direction: column; box-shadow: 0 3px 16px rgba(0, 0, 0, .42); }
.t2 { height: 29px; padding-left: 7px; color: #000; }
.t2 .wbtns { padding-right: 19px; }
.m2 { height: 20px; padding-top: 2px; gap: 15.600px; padding-left: 6.500px; }
.pg { width: 64px; height: 30px; margin: 0 -1px 0 0; border: 1px solid #c4c4c4; background: #fff; display: flex; align-items: center; justify-content: space-between; padding: 2px 4px 2px 2px; color: #888; }
.pg span { background: #f0f0f0; width: 41px; height: 24px; line-height: 26px; padding-left: 3px; }
.work { flex: 1; display: flex; min-height: 0; border-bottom: 1px solid #b0b0b0; }
.side { width: 35px; border-right: 1px solid #b4b4b4; display: flex; flex-direction: column; align-items: center; flex: none; padding-top: 5px; }
.hgrip { width: 24px; height: 2px; margin-bottom: 2px; background: repeating-linear-gradient(90deg, #b0b0b0 0 2px, transparent 2px 4px); flex: none; }
.sb { width: 31px; height: 30px; display: flex; align-items: center; justify-content: center; flex: none; }
.view { width: 1109px; display: flex; flex-direction: column; flex: none; }
.hr, .vr { display: block; flex: none; background: #f0f0f0; }
.hr text, .vr text { font: 11px 'DejaVu Sans Condensed', sans-serif; letter-spacing: -.6px; fill: #444; }
.vrow { display: flex; flex: 1; }
.canvas { flex: 1; background: #d7d7d7; padding: 44px 0 0 114px; overflow: hidden; }
.paper { width: 860px; height: 609px; background: #fff; box-shadow: 6px 6px 0 #959595; padding: 56px 0 0 39px; }
.map { display: block; }
.si { font: 7.200px 'Liberation Sans', sans-serif; fill: #222; }
.props { flex: 1; display: flex; flex-direction: column; margin-left: 2px; min-width: 0; }
.tabs { height: 20px; display: flex; align-items: flex-end; border-bottom: 1px solid #a0a0a0; flex: none; }
.tab { height: 18px; width: 81px; border: 1px solid #d0d0d0; border-bottom: 0; display: flex; justify-content: center; align-items: center; padding-top: 3px; }
.tab.on { width: 53px; height: 20px; background: #fff; border-color: #d0d0d0; margin-bottom: -1px; padding: 2px 4px 0 0; }
.it { margin-top: 1px; height: 20px; }
.ilist { height: 177px; margin-top: 2px; background: #fff; border: 1px solid #828790; flex: none; }
.ih { height: 24px; display: flex; }
.ih span { border-right: 1px solid #dedede; width: 36px; display: flex; align-items: center; padding-left: 5px; }
.ih span:last-child { flex: 1; padding-left: 3px; }
.ir { display: flex; padding: 4px 0 0 3px; }
.ir .cb + .cb { margin-left: 23px; }
.ir svg { margin: -1px 0 0 24px; }
.ir b { margin: -3px 0 0 7px; }
.ip { flex: 1; margin-top: -2px; position: relative; display: flex; flex-direction: column; min-height: 0; box-shadow: 0 0 10px rgba(0, 0, 0, .3); background: #f0f0f0; }
.ipt { height: 31px; background: #fff; display: flex; align-items: center; padding-left: 8px; color: #8f8f8f; font: 12px/16px 'Open Sans', sans-serif; flex: none; }
.ipt i { margin-left: auto; width: 19px; height: 19px; background: #e1e1e1; color: #fff; font: bold 10px/17px 'DejaVu Sans', sans-serif; text-align: center; margin-right: 2px; }
.ipm { height: 17px; background: #c7c7c7; padding: 2px 0 0 5px; flex: none; }
.scroll { flex: 1; display: flex; min-height: 0; border: 1px solid #828790; overflow: hidden; }
.form { flex: 1; padding: 17px 12px 0 11px; overflow: hidden; }
.grp { border: 1px solid #dcdcdc; padding: 0 12px; }
.gt { display: flex; width: max-content; align-items: center; gap: 7px; height: 14px; margin: -4px 0 0 -13px; padding: 0 6px 0 2px; background: #f0f0f0; color: #333; }
.g1 { height: 168px; } .g2 { height: 111px; margin-top: 13px; } .g3 { height: 200px; margin-top: 13px; }
.push { height: 21px; margin-top: 9px; border: 1px solid #adadad; background: #e1e1e1; display: flex; justify-content: center; align-items: center; padding-top: 1px; }
.f { display: flex; align-items: center; height: 20px; margin-top: 10px; }
.f + .f { margin-top: 12px; }
.f label { width: 66px; padding-top: 1px; flex: none; }
.in { flex: 1; height: 20px; border: 1px solid #6f6f6f; background: #fff; display: flex; align-items: center; padding: 1px 2px 0; }
.f > svg { margin: 0 3px 0 10px; }
.f + .f.c { margin-top: 8px; height: 22px; }
.cmb { flex: 1; height: 22px; border: 1px solid #adadad; background: #e1e1e1; display: flex; align-items: center; justify-content: space-between; padding: 1px 5px 0 3px; }
.sq { width: 21px; height: 20px; border: 1px solid #adadad; background: #e1e1e1; display: flex; align-items: center; justify-content: center; margin-left: 7px; flex: none; }
.ck-row { display: flex; align-items: center; gap: 4px; height: 14px; }
.ck-row.d { margin-top: 9px; }
.f.k { margin-top: 12px; }
.gt + .f.k { margin-top: 11px; }
.cmb.n, .sq.n { margin-left: auto; }
.cmb.n { flex: none; width: 141px; height: 20px; }
.off { margin-top: 11px; color: #8a8a8a; }
.off .cb { border-color: #ccc; }
.gt + .f.x { margin-top: 11px; }
.f.x label { width: 34px; }
.sbar { width: 17px; display: flex; flex-direction: column; align-items: center; padding-top: 5px; border-left: 1px solid #fff; flex: none; }
.sbar i { width: 15px; height: 177px; background: #cdcdcd; margin-top: 3px; }
.sbar .dn { margin-top: auto; margin-bottom: 3px; }
.wst { height: 27px; display: flex; align-items: center; padding-left: 7px; flex: none; }
.wst .t { padding-top: 2px; }
.s2 { margin-left: 908px; } .s3 { margin-left: 69px; } .s4 { margin-left: 61px; }
.z { width: 105px; margin-left: 69px; height: 21px; }
.wst .z .t { padding-top: 1px; }
.slide { width: 100px; height: 4px; border: 1px solid #d6d6d6; background: #e7eaea; margin-left: 6px; position: relative; }
.slide i { position: absolute; left: 5px; top: -10px; width: 10px; height: 21px; background: #0078d7; }
.rz { margin: 12px 0 0 9px; }
.tipbox { position: absolute; left: 23px; top: 400px; width: 185px; height: 19px; background: #fff; border: 1px solid #767676; box-shadow: 3px 3px 2px rgba(0, 0, 0, .4); color: #575757; padding: 2px 5px; }
</style>
